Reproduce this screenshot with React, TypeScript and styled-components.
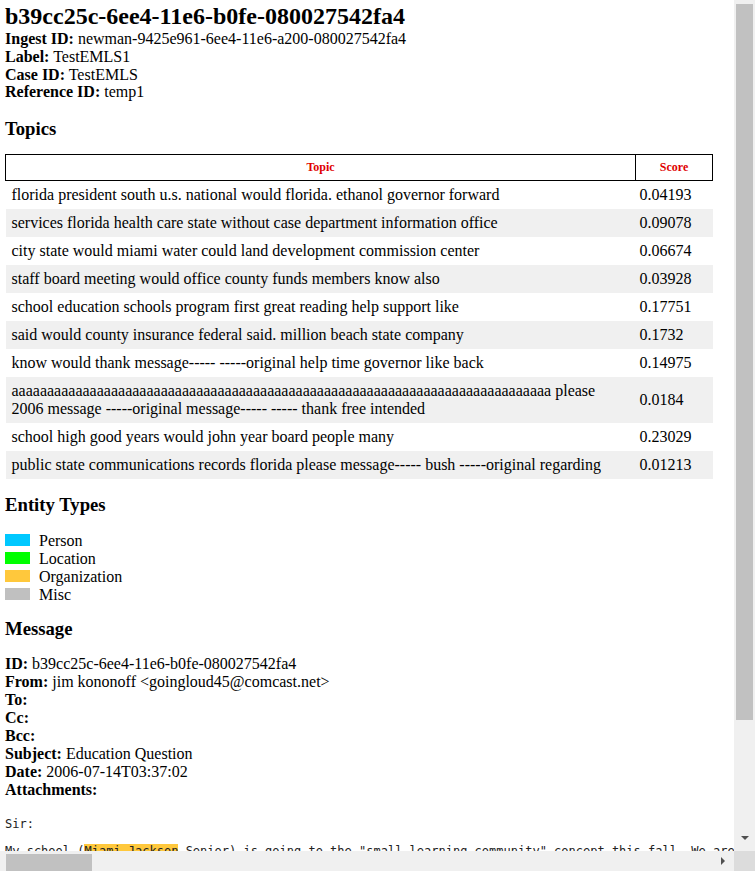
import styled, { createGlobalStyle } from "styled-components";

const GlobalStyle = createGlobalStyle`
  html, body {
    margin: 0;
    padding: 0;
    overflow: hidden;
    background: #ffffff;
  }
  body {
    font-family: "Liberation Serif", "Times New Roman", serif;
    color: #000000;
  }
`;

const Window = styled.div`
  display: grid;
  grid-template-columns: 734px 21px;
  grid-template-rows: 851px 20px;
  width: 755px;
  height: 871px;
`;

const Page = styled.main`
  overflow: hidden;
  padding: 0 5px;
  font-size: 16px;
  line-height: 17.8px;
`;

const Title = styled.h1`
  margin: 3px 0 0;
  font-size: 24px;
  line-height: 27px;
  font-weight: bold;
`;

const Field = styled.div<{ $tall?: boolean }>`
  white-space: nowrap;
  ${(p) => (p.$tall ? "line-height: 18px;" : "")}
`;

const FieldLabel = styled.b`
  font-weight: bold;
`;

const SectionTitle = styled.h3<{ $top: number; $bottom: number }>`
  margin: ${(p) => p.$top}px 0 ${(p) => p.$bottom}px;
  font-size: 18.72px;
  line-height: 20.7px;
  font-weight: bold;
`;

const TopicTable = styled.table`
  width: 708px;
  border-collapse: collapse;
`;

const HeadCell = styled.th<{ $width?: number }>`
  border: 1px solid #000000;
  padding: 6px 4px;
  font-size: 12px;
  line-height: 13px;
  font-weight: bold;
  color: #e00000;
  text-align: center;
  ${(p) => (p.$width ? `width: ${p.$width}px;` : "")}
`;

const TopicRow = styled.tr<{ $shaded: boolean }>`
  background: ${(p) => (p.$shaded ? "#f0f0f0" : "#ffffff")};
`;

const TopicCell = styled.td`
  padding: 5px 6px;
  line-height: 18px;
  vertical-align: middle;
`;

const ScoreCell = styled.td`
  padding: 5px 4px;
  line-height: 18px;
  vertical-align: middle;
`;

const Legend = styled.div`
  display: flex;
  flex-direction: column;
  line-height: 18px;
`;

const LegendItem = styled.div`
  display: flex;
  align-items: flex-start;
  gap: 9px;
`;

const Swatch = styled.span<{ $color: string }>`
  width: 25px;
  height: 12px;
  margin-top: 2px;
  background: ${(p) => p.$color};
`;

const Body = styled.pre`
  margin: 19px 0 0;
  font-family: "DejaVu Sans Mono", "Liberation Mono", monospace;
  font-size: 12px;
  line-height: 13.5px;
  white-space: pre;
  color: #222222;
`;

const Mark = styled.span<{ $color: string }>`
  background: ${(p) => p.$color};
`;

const VBar = styled.div`
  display: flex;
  flex-direction: column;
  align-items: center;
  background: #f0f0f0;
`;

const VThumb = styled.div`
  width: 17px;
  height: 716px;
  margin-top: 4px;
  background: #c1c1c1;
`;

const Spacer = styled.div`
  flex: 1;
`;

const DownArrow = styled.div`
  width: 0;
  height: 0;
  margin-bottom: 11px;
  border-left: 4px solid transparent;
  border-right: 4px solid transparent;
  border-top: 4px solid #505050;
`;

const HBar = styled.div`
  display: flex;
  align-items: center;
  background: #f0f0f0;
`;

const HThumb = styled.div`
  align-self: flex-end;
  width: 86px;
  height: 17px;
  margin-left: 6px;
  background: #c1c1c1;
`;

const RightArrow = styled.div`
  width: 0;
  height: 0;
  margin-right: 9px;
  border-top: 4px solid transparent;
  border-bottom: 4px solid transparent;
  border-left: 4px solid #505050;
`;

const Corner = styled.div`
  background: #dcdcdc;
`;

const COLORS = {
  person: "#00c8ff",
  location: "#00ff00",
  organization: "#ffc83c",
  misc: "#c0c0c0",
};

const topics = [
  ["florida president south u.s. national would florida. ethanol governor forward", "0.04193"],
  ["services florida health care state without case department information office", "0.09078"],
  ["city state would miami water could land development commission center", "0.06674"],
  ["staff board meeting would office county funds members know also", "0.03928"],
  ["school education schools program first great reading help support like", "0.17751"],
  ["said would county insurance federal said. million beach state company", "0.1732"],
  ["know would thank message----- -----original help time governor like back", "0.14975"],
  [
    "a".repeat(76) + " please 2006 message -----original message----- ----- thank free intended",
    "0.0184",
  ],
  ["school high good years would john year board people many", "0.23029"],
  ["public state communications records florida please message----- bush -----original regarding", "0.01213"],
];

const legend = [
  { name: "Person", color: COLORS.person },
  { name: "Location", color: COLORS.location },
  { name: "Organization", color: COLORS.organization },
  { name: "Misc", color: COLORS.misc },
];

const App = () => {
  return (
    <>
      <GlobalStyle />
      <Window>
        <Page>
          <Title>b39cc25c-6ee4-11e6-b0fe-080027542fa4</Title>
          <Field><FieldLabel>Ingest ID:</FieldLabel> newman-9425e961-6ee4-11e6-a200-080027542fa4</Field>
          <Field><FieldLabel>Label:</FieldLabel> TestEMLS1</Field>
          <Field><FieldLabel>Case ID:</FieldLabel> TestEMLS</Field>
          <Field><FieldLabel>Reference ID:</FieldLabel> temp1</Field>

          <SectionTitle $top={18} $bottom={14}>Topics</SectionTitle>
          <TopicTable>
            <thead>
              <tr>
                <HeadCell>Topic</HeadCell>
                <HeadCell $width={68}>Score</HeadCell>
              </tr>
            </thead>
            <tbody>
              {topics.map(([text, score], i) => (
                <TopicRow key={i} $shaded={i % 2 === 1}>
                  <TopicCell>{text}</TopicCell>
                  <ScoreCell>{score}</ScoreCell>
                </TopicRow>
              ))}
            </tbody>
          </TopicTable>

          <SectionTitle $top={16} $bottom={16}>Entity Types</SectionTitle>
          <Legend>
            {legend.map((item) => (
              <LegendItem key={item.name}>
                <Swatch $color={item.color} />
                <span>{item.name}</span>
              </LegendItem>
            ))}
          </Legend>

          <SectionTitle $top={15} $bottom={16}>Message</SectionTitle>
          <Field $tall><FieldLabel>ID:</FieldLabel> b39cc25c-6ee4-11e6-b0fe-080027542fa4</Field>
          <Field $tall><FieldLabel>From:</FieldLabel> jim kononoff &lt;goingloud45@comcast.net&gt;</Field>
          <Field $tall><FieldLabel>To:</FieldLabel></Field>
          <Field $tall><FieldLabel>Cc:</FieldLabel></Field>
          <Field $tall><FieldLabel>Bcc:</FieldLabel></Field>
          <Field $tall><FieldLabel>Subject:</FieldLabel> Education Question</Field>
          <Field $tall><FieldLabel>Date:</FieldLabel> 2006-07-14T03:37:02</Field>
          <Field $tall><FieldLabel>Attachments:</FieldLabel></Field>

          <Body>
            {"Sir:\n\nMy school ("}
            <Mark $color={COLORS.organization}>Miami Jackson</Mark>
            {" Senior) is going to the \"small learning community\" concept this fall. We are looking for funding to help our teachers get the training they need and to buy the materials for the new academies, and we would like to know whether the state has any grants that we could apply for before the start of the school year.\n\nThank you for your time,\n\njim kononoff"}
          </Body>
        </Page>
        <VBar>
          <VThumb />
          <Spacer />
          <DownArrow />
        </VBar>
        <HBar>
          <HThumb />
          <Spacer />
          <RightArrow />
        </HBar>
        <Corner />
      </Window>
    </>
  );
};

export default App;
